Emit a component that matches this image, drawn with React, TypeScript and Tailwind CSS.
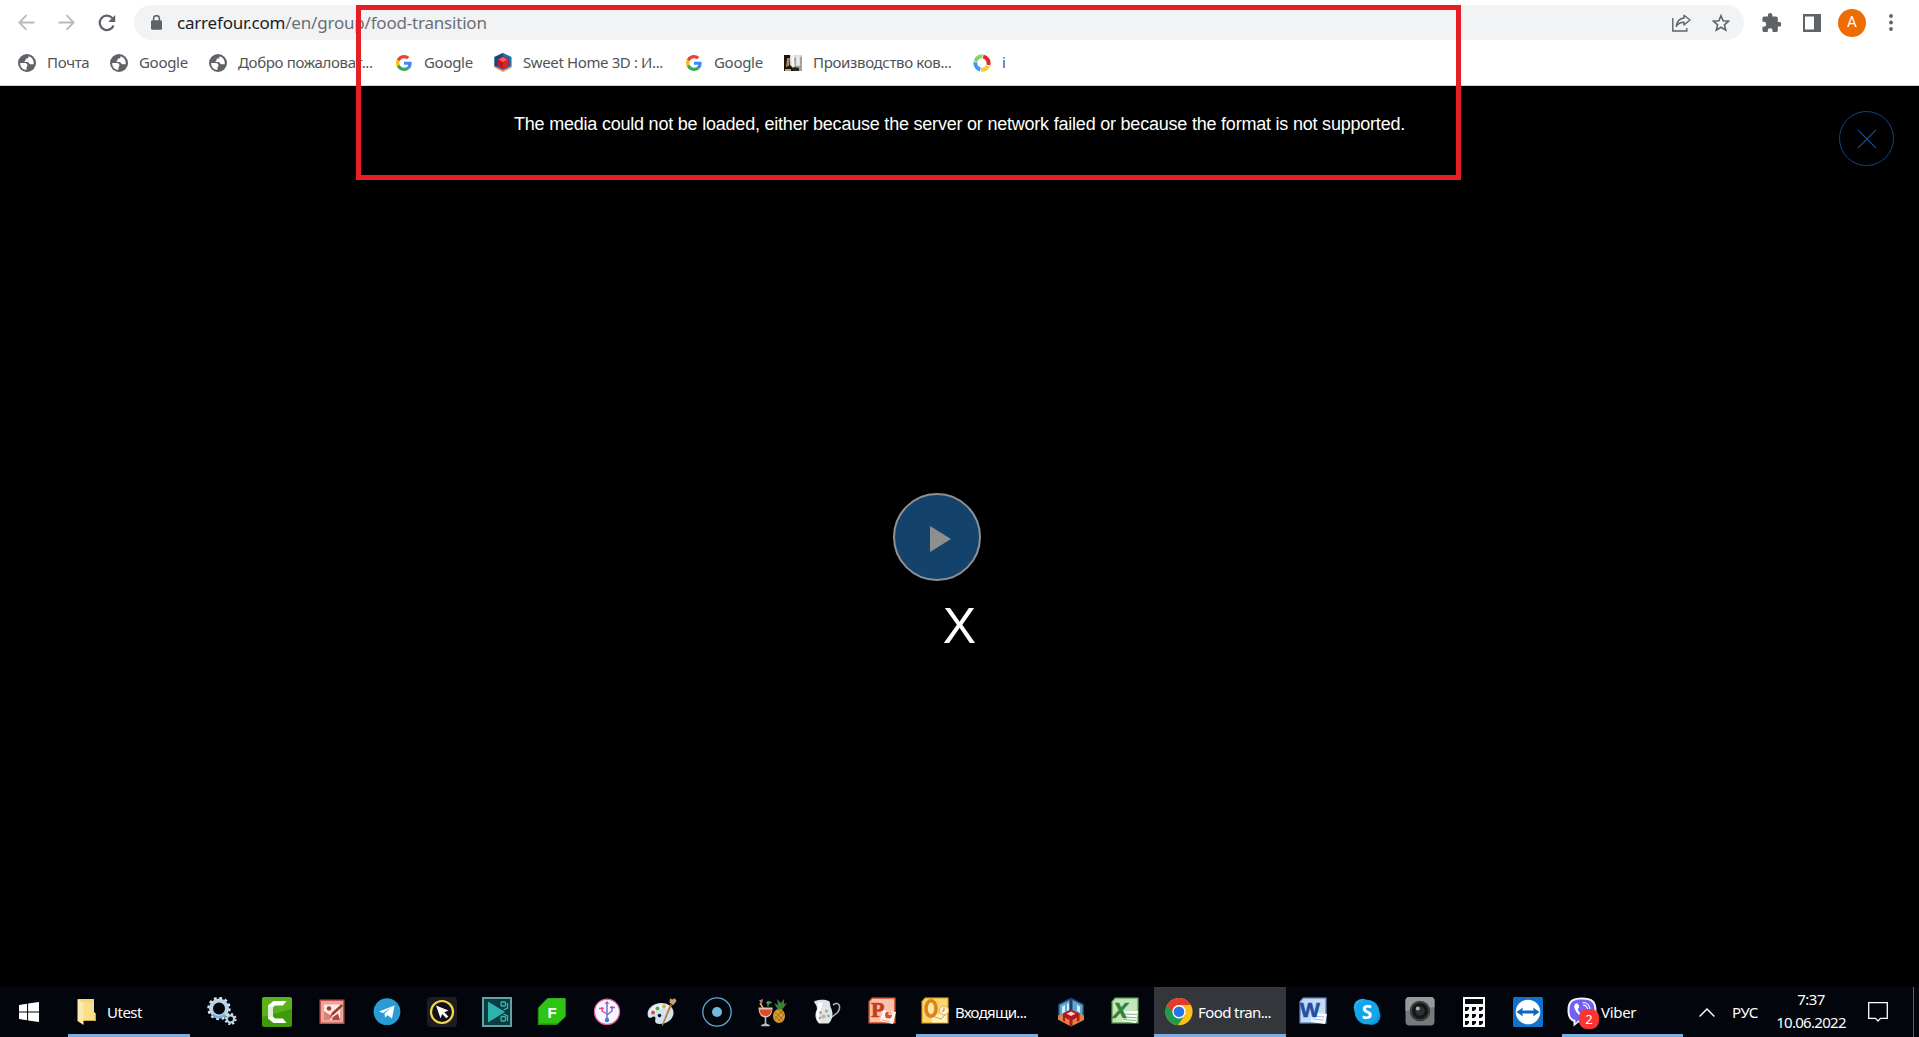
import type { ReactNode } from 'react';

/* ---------- browser toolbar icons ---------- */

const Globe = () => (
  <svg className="size-[18px]" viewBox="0 0 18 18">
    <circle cx="9" cy="9" r="9" fill="#5f6368" />
    <path d="M2.200 9H7c1.600 0 2.400 1 2.400 2.200S8.500 13 8.500 14v1.800C4.800 16 2 13 2.200 9zM10.500 2.200c.3 1.500-.6 2.300-1.900 2.300-1.200 0-1 1-1 1.600 0 .8-.6 1-1.500 1 .4 1 1.400 1 2.900 1 2 0 2 2.200 3.200 2.200h3.500c.6-4-2-7.300-5.200-8.100z" fill="#fff" />
  </svg>
);

const GoogleG = () => (
  <svg className="size-[16px]" viewBox="0 0 48 48">
    <path fill="#EA4335" d="M24 9.500c3.540 0 6.710 1.220 9.210 3.600l6.850-6.850C35.900 2.380 30.470 0 24 0 14.620 0 6.510 5.380 2.560 13.220l7.980 6.190C12.430 13.720 17.740 9.500 24 9.500z" />
    <path fill="#4285F4" d="M46.980 24.550c0-1.570-.15-3.090-.38-4.550H24v9.020h12.940c-.58 2.960-2.260 5.480-4.780 7.180l7.730 6c4.510-4.180 7.090-10.360 7.090-17.650z" />
    <path fill="#FBBC05" d="M10.530 28.590c-.48-1.450-.76-2.990-.76-4.590s.27-3.140.76-4.590l-7.980-6.190C.92 16.460 0 20.120 0 24c0 3.880.92 7.540 2.560 10.780l7.970-6.190z" />
    <path fill="#34A853" d="M24 48c6.480 0 11.930-2.130 15.890-5.810l-7.730-6c-2.150 1.450-4.920 2.300-8.160 2.300-6.260 0-11.570-4.220-13.470-9.910l-7.980 6.190C6.510 42.620 14.620 48 24 48z" />
  </svg>
);

const SweetHomeSmall = () => (
  <svg className="size-[19px]" viewBox="0 0 18 19">
    <path d="M9 0 17.500 4v9.500L9 18 .5 13.500V4z" fill="#1b6fb4" />
    <path d="M.5 4 9 0v5L3.500 8v6l-3-1z" fill="#14487e" />
    <path d="M.5 13 9 17l8.500-4v1.600L9 19 .5 14.600z" fill="#f0955a" />
    <path d="M9 3 14.800 6.500v6L9 16l-5.800-3.500v-6z" fill="#c9131b" />
    <path d="M9 4 13.200 6.500 9 9.300 4.800 6.500z" fill="#ff5f62" />
    <path d="M9 9.300V15.500l5-3V6.500z" fill="#e3212a" />
  </svg>
);

const BootsIcon = () => (
  <svg className="h-[16px] w-[18px]" viewBox="0 0 18 16">
    <rect width="18" height="16" fill="#d9d6d0" />
    <path d="M0 0h6v10l4 4v2H0z" fill="#17130f" />
    <path d="M3 3h3l-1 8-3 1z" fill="#a98a62" />
    <path d="M7 0h3l1 10-3 2z" fill="#f7f7f5" />
    <path d="M10 3h2v8h4V2h2v14h-7z" fill="#a5a29d" />
    <path d="M12.500 0h3v10h-3z" fill="#e9e8e6" />
    <path d="M8 13l3-1 4 1v3H9z" fill="#2a2723" />
    <path d="M1 14h6v2H1z" fill="#c9a066" />
  </svg>
);

const RingIcon = () => (
  <svg className="size-[18px]" viewBox="0 0 18 18" fill="none" strokeWidth="4">
    <path d="M10.200 2.500A6.700 6.700 0 0 1 15.300 11" stroke="#dd2c22" />
    <path d="M15 11.800A6.700 6.700 0 0 1 8 15.600" stroke="#f0cf31" />
    <path d="M7.300 15.500A6.700 6.700 0 0 1 2.400 8.300" stroke="#3b9be3" />
    <path d="M2.500 7.600A6.700 6.700 0 0 1 9.400 2.300" stroke="#8ccf6c" />
  </svg>
);

/* ---------- taskbar icons, all on a 30px grid ---------- */

const Icon = ({ children }: { children: ReactNode }) => (
  <svg className="size-[30px] shrink-0" viewBox="0 0 30 30">
    {children}
  </svg>
);

const Gears = () => (
  <Icon>
    <g fill="none">
      <circle cx="12" cy="11.500" r="8" stroke="#bcd3e6" strokeWidth="4" />
      <circle cx="12" cy="11.500" r="10.600" stroke="#dfe9f2" strokeWidth="2.200" strokeDasharray="2.775 2.775" />
      <path d="M5.500 17.500a8.600 8.600 0 0 0 12.500 0" stroke="#6fb4e4" strokeWidth="2.600" />
      <circle cx="23.500" cy="22" r="3.600" stroke="#b9d2e8" strokeWidth="2.200" />
      <circle cx="23.500" cy="22" r="5.200" stroke="#dbe7f1" strokeWidth="1.800" strokeDasharray="2.042 2.042" />
    </g>
  </Icon>
);

const Camtasia = () => (
  <Icon>
    <rect width="30" height="30" rx="2.500" fill="#3f9a0c" />
    <path d="M0 2.500A2.500 2.500 0 0 1 2.500 0h25A2.500 2.500 0 0 1 30 2.500V12L0 20z" fill="#5bb01c" />
    <path d="M24.500 4H11.500L6 8.500v13L11.500 26h13l-3.500-4.500h-8L11 19.500v-9l2-2h8z" fill="#fff" />
    <path d="M6 8.500 11 10.500v9l-5 2z" fill="#dfeed6" />
  </Icon>
);

const RedPicture = () => (
  <Icon>
    <rect x="2.500" y="2.500" width="25" height="24.500" fill="#c2524c" />
    <rect x="4" y="4" width="22" height="21.500" fill="#e8a69d" />
    <rect x="7" y="7.500" width="16" height="15.500" fill="#fbeae5" />
    <path d="M7 14l9 6-4 3H7z" fill="#dd8077" />
    <circle cx="12" cy="11.500" r="2.300" fill="#a73833" />
    <path d="m24.500 7-9.500 8.500-2.500 4.500 4.500-2.500L26 9z" fill="#a83834" />
    <path d="M16 20l5-3.500 2 6.500h-8z" fill="#b8463f" />
  </Icon>
);

const Telegram = () => (
  <Icon>
    <circle cx="15" cy="14.700" r="13.400" fill="#2b9bd3" />
    <path d="M7 14.500 22.500 8.500 20 21.500 15.500 18.200 13 20.500l-.5-4 7-6-8.500 5.500z" fill="#fff" />
  </Icon>
);

const CursorApp = () => (
  <Icon>
    <rect width="30" height="30" rx="4" fill="#201a21" />
    <circle cx="15" cy="15" r="11" fill="#141018" stroke="#f0dc4a" strokeWidth="2.200" />
    <path d="m9 8.500 12.500 5-4.200 1.700 4 4.200-1.900 1.900-4.200-4.200-1.700 4.200z" fill="#fff" />
  </Icon>
);

const VideoEditor = () => (
  <Icon>
    <rect width="30" height="30" fill="#5fa3a6" />
    <rect x="2" y="2" width="26" height="26" fill="#0c3c40" />
    <path d="M6 4.500 23 15 6 25.500z" fill="#2cb5aa" />
    <g fill="none" stroke="#45b3ad" strokeWidth="1.300">
      <rect x="19" y="5" width="4.500" height="4" rx="1" />
      <rect x="19" y="19.500" width="4.500" height="4.500" rx="1" />
      <path d="M25.500 6v5l-4 2M25.500 24v-5l-4-2" />
    </g>
  </Icon>
);

const GreenF = () => (
  <Icon>
    <path d="M10 1.200h18.500V20L20 28H.700V11z" fill="#1d8f08" />
    <path d="M11 1.200h17.500V19L20.500 26.500H2V10.500z" fill="#2fc415" />
    <text x="15" y="21" textAnchor="middle" fontFamily="Liberation Sans" fontSize="15" fontWeight="700" fill="#fff">F</text>
  </Icon>
);

const Usb = () => (
  <Icon>
    <circle cx="15" cy="14.800" r="12.600" fill="#f8f6ff" stroke="#e55a9b" strokeWidth="1.200" />
    <g fill="none" strokeWidth="1.400">
      <path d="M15 5v18" stroke="#6a63d9" />
      <path d="M10 10v4l5 3M7 11.500h5" stroke="#e0527c" />
      <path d="M20 9v5l-5 4M18 10.500h5" stroke="#8b5bd0" />
    </g>
    <path d="m15 3.500 2.200 3.500h-4.400z" fill="#e0527c" />
    <circle cx="15" cy="23" r="2.200" fill="#3f7ee6" />
  </Icon>
);

const Paint = () => (
  <Icon>
    <path d="M13 6C5 6.500-.5 13 .8 18.500c.8 3 3 3 4.500 1.500 2-1.500 3.700 0 3 2.500-.8 3 1 4.500 4.200 4.500 8 0 14.500-5.500 14-12C26 9 20 5.500 13 6z" fill="#cfe3f0" />
    <path d="M13 7.500C7 8 2 12.500 2 17c6-3 14-6 22-6-2-2.500-6-4-11-3.500z" fill="#eef6fb" />
    <circle cx="6" cy="15.500" r="2" fill="#d2553e" />
    <circle cx="10.500" cy="11.500" r="2" fill="#5aa846" />
    <circle cx="17" cy="9.500" r="2" fill="#e5b13a" />
    <circle cx="12.500" cy="18.500" r="1.800" fill="#0b1420" />
    <path d="m23 7 2 1-9 20.500-1.500.500L16 25z" fill="#c27a35" />
    <path d="M22.500 5.500 23 1.500l2.500 1L28 1.200l1.500 3-3.500 4z" fill="#c9a376" />
  </Icon>
);

const CircleDot = () => (
  <Icon>
    <circle cx="15" cy="15" r="14.200" fill="none" stroke="#62a9d1" strokeWidth="1.300" />
    <circle cx="15" cy="15" r="5" fill="#74b9e2" />
  </Icon>
);

const Cocktail = () => (
  <Icon>
    <path d="M21 13 17 6l4 2-1-6 4 4 3-4v5l3-1-5 7z" fill="#3d7d35" />
    <ellipse cx="22" cy="19" rx="6" ry="7" fill="#d79a32" />
    <path d="m18 15 8 8m-5-11 6 6m-9 1 6 6m2-12-8 9m10-5-7 7" stroke="#98601d" strokeWidth=".8" fill="none" />
    <path d="M1.500 10.500h14c0 6-2.500 10-7 10s-7-4-7-10z" fill="#e8c0b8" />
    <path d="M2.500 12.500h12c-.5 4-2.500 6.500-6 6.500s-5.500-2.500-6-6.500z" fill="#dc4a2c" />
    <path d="M7.700 20h1.600v6.500l3.500 1.500v1.300H4.200V28l3.500-1.500z" fill="#b9bfc6" />
    <path d="M2 3.500 6 2 5 7z" fill="#e06ba0" />
    <path d="m3 6 3 5" stroke="#f0b838" strokeWidth="1.500" />
    <path d="M9 5c3-2 5-1 6 1l-3 1-1 4-1-4z" fill="#37a04b" />
  </Icon>
);

const Jug = () => (
  <Icon>
    <path d="M21 8c7-5 8 3 4.500 7.500L20 20" fill="none" stroke="#a9b2ba" strokeWidth="1.600" />
    <path d="M2 4.500c4-2 12-2.500 15.500 0 1 3 .5 5 2 7.500 2 5.500 1 11-3 14.500H7c-4-4-4.500-9-2-14.500 0-4-2-5-3-7.500z" fill="#dfe5e8" />
    <path d="M6 5.500h5L9 12c-3 5-2 10 0 13.500H7.500C4 22 3.500 17 6 12z" fill="#fff" />
    <circle cx="8.500" cy="15.500" r="1.500" fill="#e09a7a" />
    <circle cx="14.500" cy="14" r="1.500" fill="#8bbf74" />
    <circle cx="11.500" cy="19.500" r="2" fill="#e2a1a8" />
    <circle cx="16.500" cy="19" r="1.400" fill="#72b6b3" />
    <circle cx="8" cy="21" r="1.200" fill="#7fb574" />
  </Icon>
);

const PowerPoint = () => (
  <Icon>
    <path d="M1.500 4.500 5 .500h23.500v26h-27z" fill="#e2643d" />
    <path d="M3 5 5.500 2H27v23H3z" fill="#f8c3ae" />
    <path d="M16 13 29 15l-3 12-13-3z" fill="#fdf4ef" />
    <circle cx="21.500" cy="18" r="3.500" fill="#d9502b" />
    <path d="M21.500 18V13.800l4.200 4.200z" fill="#f9d3c2" />
    <path d="m15 23 8 2" stroke="#e9a48c" />
    <text x="4" y="20" fontFamily="Liberation Serif" fontSize="22" fontWeight="700" fill="#c23e18" stroke="#c23e18" strokeWidth=".7">P</text>
  </Icon>
);

const Outlook = () => (
  <Icon>
    <path d="M1.500 4.500 5 .500h23.500v26h-27z" fill="#eeb331" />
    <path d="M3 5 5.500 2H27v23H3z" fill="#f8d777" />
    <path d="M12 19l15-4v10.500H12z" fill="#fff1c4" />
    <path d="m12 19 9 3 6-6" fill="none" stroke="#d9a534" />
    <ellipse cx="11" cy="11.500" rx="5" ry="7.800" fill="#fbe6a6" stroke="#d8851a" strokeWidth="3.600" />
    <circle cx="24" cy="13.500" r="4.500" fill="#fff4d6" stroke="#e6a739" />
    <path d="M24 10.500v3l-2 1" fill="none" stroke="#b97616" />
  </Icon>
);

const SweetHome = () => (
  <Icon>
    <path d="M15 .500 28 7v15.500L15 29.500 2 22.500V7z" fill="#1a4273" />
    <path d="M3.500 8 13.500 3v11L3.500 20zM16.500 3l10 5v12l-10-6z" fill="#5fa6cf" />
    <path d="M6 9.500 9 8v7l-3 1.500zM11 7l2-1v7l-2 1zM21 8l3 1.500v6L21 14z" fill="#d8eef7" />
    <path d="M2 18.500 5 17l10 6 10-6 3 1.500v4.500L15 29.500 2 22.500z" fill="#e08246" />
    <path d="M7 16.500 15 12.500l8.500 4v7L21 25v-4.500L16.500 23v6h-3v-6L9 20.500V25l-2-1.500z" fill="#b9161b" />
    <path d="M15 14.500 19.500 16.700 15 19l-4.500-2.300z" fill="#f5d2ca" />
  </Icon>
);

const Excel = () => (
  <Icon>
    <path d="M1.500 4.500 5 .500h23.500v26h-27z" fill="#77b56c" />
    <path d="M3 5 5.500 2H27v23H3z" fill="#c5e3bd" />
    <path d="m14 14 14 0-2 12-14-2z" fill="#f7fcf5" />
    <path d="m14 17 13 .5M13.500 20l13 .800M13 22.500l13 1" stroke="#7dba72" />
    <text x="3" y="20.500" fontFamily="Liberation Sans" fontSize="22" fontWeight="700" fontStyle="italic" fill="#2f8231" stroke="#2f8231" strokeWidth=".6">X</text>
  </Icon>
);

const Chrome = () => (
  <Icon>
    <circle cx="15" cy="14.700" r="13.600" fill="#fbc116" />
    <path d="M3.200 7.900 20.500 18.500 14 28.200A13.600 13.600 0 0 1 3.200 7.900z" fill="#209a4c" />
    <path d="M3.200 7.900A13.600 13.600 0 0 1 26.800 7.900H15c-3.500 0-6 2-6.700 7.500z" fill="#e33b2e" />
    <circle cx="15" cy="14.700" r="6.700" fill="#fff" />
    <circle cx="15" cy="14.700" r="5.300" fill="#2a73e6" />
  </Icon>
);

const Word = () => (
  <Icon>
    <path d="M1.500 4.500 5 .500h23.500v26h-27z" fill="#7e9fd1" />
    <path d="M3 5 5.500 2H27v23H3z" fill="#c8daf1" />
    <path d="m14 15 15 2-2 10-14-2z" fill="#f6faff" />
    <path d="m15 19 11 1m-11.500 2 11 1" stroke="#a9c1e4" />
    <text x="2" y="20" fontFamily="Liberation Sans" fontSize="21" fontWeight="700" fill="#1b50a4" stroke="#1b50a4" strokeWidth=".6">W</text>
  </Icon>
);

const Skype = () => (
  <Icon>
    <circle cx="10.500" cy="10.500" r="8.800" fill="#28b1f0" />
    <circle cx="19.500" cy="19" r="9" fill="#0b8fd9" />
    <circle cx="15" cy="15" r="12.300" fill="#12a5ea" />
    <text x="15" y="21.500" textAnchor="middle" fontFamily="Open Sans" fontSize="19" fontWeight="700" fill="#fff">S</text>
  </Icon>
);

const Camera = () => (
  <Icon>
    <rect x=".5" y="0" width="29" height="28.500" rx="4" fill="#77797b" />
    <path d="M.500 14V4a4 4 0 0 1 4-4h21a4 4 0 0 1 4 4v6z" fill="#97999b" />
    <circle cx="15" cy="14" r="10.300" fill="#3b3d3f" />
    <circle cx="15" cy="14" r="8" fill="#141516" />
    <circle cx="15" cy="14" r="4.700" fill="#2c3033" />
    <circle cx="12.800" cy="11.500" r="2" fill="#a9b0b5" />
  </Icon>
);

const Calculator = () => (
  <Icon>
    <rect x="4" width="22" height="30" fill="#fff" />
    <rect x="6" y="2" width="18" height="5" fill="#05080d" />
    {[10, 17, 24].map((y) =>
      [6, 13, 20].map((x) => <path key={`${x}-${y}`} d={`M${x} ${y}h4v2l-2 2h-2z`} fill="#05080d" />),
    )}
  </Icon>
);

const TeamViewer = () => (
  <Icon>
    <rect width="30" height="30" rx="1.500" fill="#1272cb" />
    <circle cx="15" cy="15" r="12.300" fill="#fff" />
    <path d="M3.500 15 10 10.500l-.8 3h11.600l-.8-3L26.500 15 20 19.500l.8-3H9.200l.8 3z" fill="#0f66bb" />
  </Icon>
);

const ViberIcon = () => (
  <Icon>
    <path d="M15 .500C5 .500.500 3.500.500 13.500c0 6 2 9.500 6 11.300V29.500l5-4c12 1 18-2 18-12S25 .500 15 .500z" fill="#f3f0ff" />
    <path d="M15 2.500C6 2.500 2.500 5 2.500 13.500c0 6 2 8.500 6 9.800v3l3-3c10 .800 16-1.500 16-9.800S24 2.500 15 2.500z" fill="#7360f2" />
    <path d="M9 6.500c2-1 3.500 3 3 4-.5 1-1.500 1-1 2.500.5 1.500 2.500 4 4.500 4.500 1.200.3 1.500-1.500 3-1 1.500.5 3.500 2 2.500 3.500-1.500 2.500-4 1.500-7-.500-3.500-2.500-6-6-6.700-9C6.900 8.500 8 7 9 6.500z" fill="#fff" />
    <path d="M15.500 5.500c4.500 0 7.500 3 7.500 7.500M16 8c3 .3 4.500 2 4.700 4.700" fill="none" stroke="#fff" strokeWidth="1.200" />
  </Icon>
);

const Folder = () => (
  <svg className="h-[26px] w-[19px]" viewBox="0 0 19 26">
    <path d="M1 0h16v13l1.500 1.500V22H5z" fill="#f6d678" />
    <path d="M6 21V3h11v10l1.500 1.500V22H6z" fill="#f9de8c" />
    <path d="M.5 0 6.500 4v22L.5 22z" fill="#fce9ae" />
    <path d="M6.500 21h12v1h-12z" fill="#d9ae48" />
  </svg>
);

const WindowsLogo = () => (
  <svg className="size-[20px]" viewBox="0 0 20 20" fill="#fff">
    <path d="M0 2.900 8.100 1.700v7.800H0zM9.100 1.600 20 0v9.500H9.100zM0 10.500h8.100v7.800L0 17.100zM9.100 10.500H20V20L9.100 18.400z" />
  </svg>
);

/* ---------- page ---------- */

const bookmarks = [
  { icon: <Globe />, label: 'Почта', box: 'w-[92px]', text: 'tracking-[-0.3px]' },
  { icon: <Globe />, label: 'Google', box: 'w-[99px]', text: 'tracking-[-0.3px]' },
  { icon: <Globe />, label: 'Добро пожаловат...', box: 'w-[186px]', text: 'tracking-[-0.33px]' },
  { icon: <GoogleG />, label: 'Google', box: 'w-[99px]', text: 'tracking-[-0.3px]' },
  { icon: <SweetHomeSmall />, label: 'Sweet Home 3D : И...', box: 'w-[191px]', text: 'tracking-[-0.38px]' },
  { icon: <GoogleG />, label: 'Google', box: 'w-[99px]', text: 'tracking-[-0.3px]' },
  { icon: <BootsIcon />, label: 'Производство ков...', box: 'w-[189px]', text: 'tracking-[-0.33px]' },
  { icon: <RingIcon />, label: 'i', box: 'w-[40px]', text: 'tracking-normal' },
];

const leftApps = [Gears, Camtasia, RedPicture, Telegram, CursorApp, VideoEditor, GreenF, Usb, Paint, CircleDot, Cocktail, Jug, PowerPoint];
const rightApps = [Word, Skype, Camera, Calculator, TeamViewer];

const Cells = ({ apps }: { apps: (() => ReactNode)[] }) => (
  <>
    {apps.map((App, i) => (
      <div key={i} className="flex flex-1 items-center justify-center">
        <App />
      </div>
    ))}
  </>
);

export default function App() {
  return (
    <div className="relative flex h-[1037px] w-[1919px] flex-col overflow-hidden bg-black font-['Noto_Sans',sans-serif]">
      <header className="flex h-[86px] flex-col border-b border-[#d5d7da] bg-white pt-[5px]">
        <div className="flex h-[35px] items-center text-[#5f6368]">
          <svg className="ml-[18px] size-[17px] text-[#babcbe]" viewBox="0 0 17 17" fill="none" stroke="currentColor" strokeWidth="1.900">
            <path d="M16.500 8.500H1.500M8.500 1.200 1.300 8.500l7.200 7.300" />
          </svg>
          <svg className="ml-[23px] size-[17px] text-[#babcbe]" viewBox="0 0 17 17" fill="none" stroke="currentColor" strokeWidth="1.900">
            <path d="M.5 8.500h15M8.500 1.200l7.200 7.300-7.200 7.300" />
          </svg>
          <svg className="ml-[23px] size-[18px]" viewBox="0 0 18 18" fill="none" stroke="currentColor" strokeWidth="2.200">
            <path d="M15.600 11.500A7.200 7.200 0 1 1 14.300 4" />
            <path d="M17.200 1v7h-7z" fill="currentColor" stroke="none" />
          </svg>
          <div className="ml-[18px] flex h-[35px] w-[1610px] items-center rounded-full bg-[#f1f3f4] pl-[17px] pr-[14px]">
            <svg className="h-[15px] w-[11px]" viewBox="0 0 11 15">
              <rect y="5.200" width="11" height="9.500" rx="1.200" fill="#5f6368" />
              <path d="M2.600 6V3.600a2.900 2.900 0 0 1 5.800 0V6" fill="none" stroke="#5f6368" strokeWidth="1.500" />
            </svg>
            <span className="ml-[15px] whitespace-nowrap text-[17px] leading-[24px] tracking-[-0.2px] text-[#6b6f74]">
              <span className="text-[#202124]">carrefour.com</span>/en/group/food-transition
            </span>
            <svg className="ml-auto h-[18px] w-[19px]" viewBox="0 0 19 18" fill="none" stroke="#5f6368" strokeWidth="1.400">
              <path d="M.8 4v13h14v-3" />
              <path d="M12 1.200 18 6l-6 5V8.300C8.500 8 6.500 9.300 4.300 12.300 5 7.500 7.500 4.500 12 4z" strokeLinejoin="round" />
            </svg>
            <svg className="ml-[21px] size-[18px]" viewBox="0 0 18 18" fill="none" stroke="#5f6368" strokeWidth="1.600">
              <path d="m9 1.700 2.100 5.100 5.500.4-4.200 3.600 1.300 5.300L9 13.300l-4.700 2.800 1.300-5.300L1.400 7.200l5.500-.4z" />
            </svg>
          </div>
          <svg className="ml-[18px] size-[19px]" viewBox="1.500 1 21 21" fill="#5f6368">
            <path d="M20.500 11H19V7c0-1.100-.9-2-2-2h-4V3.500a2.500 2.500 0 0 0-5 0V5H4c-1.100 0-2 .9-2 2v3.800h1.500a2.700 2.700 0 0 1 0 5.400H2V20c0 1.100.9 2 2 2h3.800v-1.500a2.700 2.700 0 0 1 5.400 0V22H17c1.100 0 2-.9 2-2v-4h1.500a2.500 2.500 0 0 0 0-5z" />
          </svg>
          <svg className="ml-[22px] size-[18px]" viewBox="0 0 18 18">
            <path d="M0 0h18v18H0zM2 2.500v13h9v-13z" fill="#5f6368" fillRule="evenodd" />
          </svg>
          <div className="ml-[17px] flex size-[28px] items-center justify-center rounded-full bg-[#ee6c00] font-['Roboto',sans-serif] text-[15px] text-white">A</div>
          <svg className="ml-[23px] h-[17px] w-[4px]" viewBox="0 0 4 17" fill="#5f6368">
            <circle cx="2" cy="2" r="1.900" />
            <circle cx="2" cy="8.500" r="1.900" />
            <circle cx="2" cy="15" r="1.900" />
          </svg>
        </div>
        <nav className="flex h-[45px] items-center pl-[18px] text-[15px] leading-[20px] text-[#505357]">
          {bookmarks.map((b, i) => (
            <div key={i} className={`flex shrink-0 items-center gap-[11px] ${b.box}`}>
              <span className="flex w-[18px] shrink-0 justify-center">{b.icon}</span>
              <span className={`whitespace-nowrap pb-[2px] ${b.text}`}>{b.label}</span>
            </div>
          ))}
        </nav>
      </header>

      <main className="relative flex h-[901px] flex-col items-center bg-black font-['Liberation_Sans',sans-serif] text-white">
        <p className="mt-[25px] whitespace-nowrap text-[18px] leading-[26px] tracking-[-0.215px]">
          The media could not be loaded, either because the server or network failed or because the format is not supported.
        </p>
        <span className="mt-[460px] text-[50px] leading-[58px]">X</span>
        <button className="absolute left-[893px] top-[407px] flex size-[88px] items-center justify-center rounded-full border-2 border-[#8d9196] bg-[#13426b]">
          <svg className="ml-[7px] mt-[4px] h-[26px] w-[21px]" viewBox="0 0 21 26">
            <path d="M0 0 21 13 0 26z" fill="#8e8f91" />
          </svg>
        </button>
        <button className="absolute right-[25px] top-[25px] flex size-[55px] items-center justify-center rounded-full border border-[#14467f]">
          <svg className="size-[18px]" viewBox="0 0 18 18" stroke="#15539a" strokeWidth="1.200">
            <path d="m0 0 18 18M18 0 0 18" />
          </svg>
        </button>
      </main>

      <footer className="flex h-[50px] items-stretch bg-[#02050b] text-[15px] leading-[20px] text-white">
        <div className="flex w-[58px] items-center justify-center pb-px">
          <WindowsLogo />
        </div>
        <div className="ml-[10px] flex w-[122px] items-center border-b-[3px] border-[#76b0e6] pl-[9px] pt-[3px]">
          <Folder />
          <span className="ml-[11px] tracking-[-0.5px]">Utest</span>
        </div>
        <div className="ml-[5px] flex w-[714px]">
          <Cells apps={leftApps} />
        </div>
        <div className="ml-[7px] flex w-[122px] items-center border-b-[3px] border-[#76b0e6] pl-[4px] pt-[3px]">
          <Outlook />
          <span className="ml-[5px] whitespace-nowrap tracking-[-0.7px]">Входящи...</span>
        </div>
        <div className="ml-[6px] flex w-[108px]">
          <Cells apps={[SweetHome, Excel]} />
        </div>
        <div className="ml-[2px] flex w-[132px] items-center border-b-[3px] border-[#76b0e6] bg-[#33373b] pl-[10px] pt-[3px]">
          <Chrome />
          <span className="ml-[4px] whitespace-nowrap tracking-[-0.6px]">Food tran...</span>
        </div>
        <div className="flex w-[269px]">
          <Cells apps={rightApps} />
        </div>
        <div className="ml-[7px] flex w-[121px] items-center border-b-[3px] border-[#76b0e6] pl-[5px] pt-[3px]">
          <div className="relative flex">
            <ViberIcon />
            <span className="absolute left-[12px] top-[12px] flex size-[20px] items-center justify-center rounded-[8px] bg-[#fb3531] text-[13px]">2</span>
          </div>
          <span className="ml-[4px] tracking-[-0.3px]">Viber</span>
        </div>
        <div className="ml-[16px] flex items-center">
          <svg className="h-[9px] w-[16px]" viewBox="0 0 16 9" fill="none" stroke="#fff" strokeWidth="1.400">
            <path d="m.6 8.400 7.400-7.400 7.400 7.400" />
          </svg>
        </div>
        <span className="ml-[17px] w-[26px] self-center tracking-[-0.3px]">РУС</span>
        <div className="ml-[17px] flex w-[72px] flex-col items-center justify-center pb-[2px] leading-[23px]">
          <span className="tracking-[-0.6px]">7:37</span>
          <span className="tracking-[-0.7px]">10.06.2022</span>
        </div>
        <div className="ml-[21px] flex w-[20px] items-center justify-center">
          <svg className="h-[20px] w-[20px]" viewBox="0 0 20 20" fill="none" stroke="#fff" strokeWidth="1.300">
            <path d="M.7.700h18.600v15.600h-6.800L10 19l-2.500-2.700H.7z" />
          </svg>
        </div>
        <div className="ml-auto mr-[5px] w-px bg-[#5c5f63]" />
      </footer>

      <div className="pointer-events-none absolute left-[356px] top-[5px] h-[175px] w-[1105px] border-[5px] border-[#e81e25]" />
    </div>
  );
}
